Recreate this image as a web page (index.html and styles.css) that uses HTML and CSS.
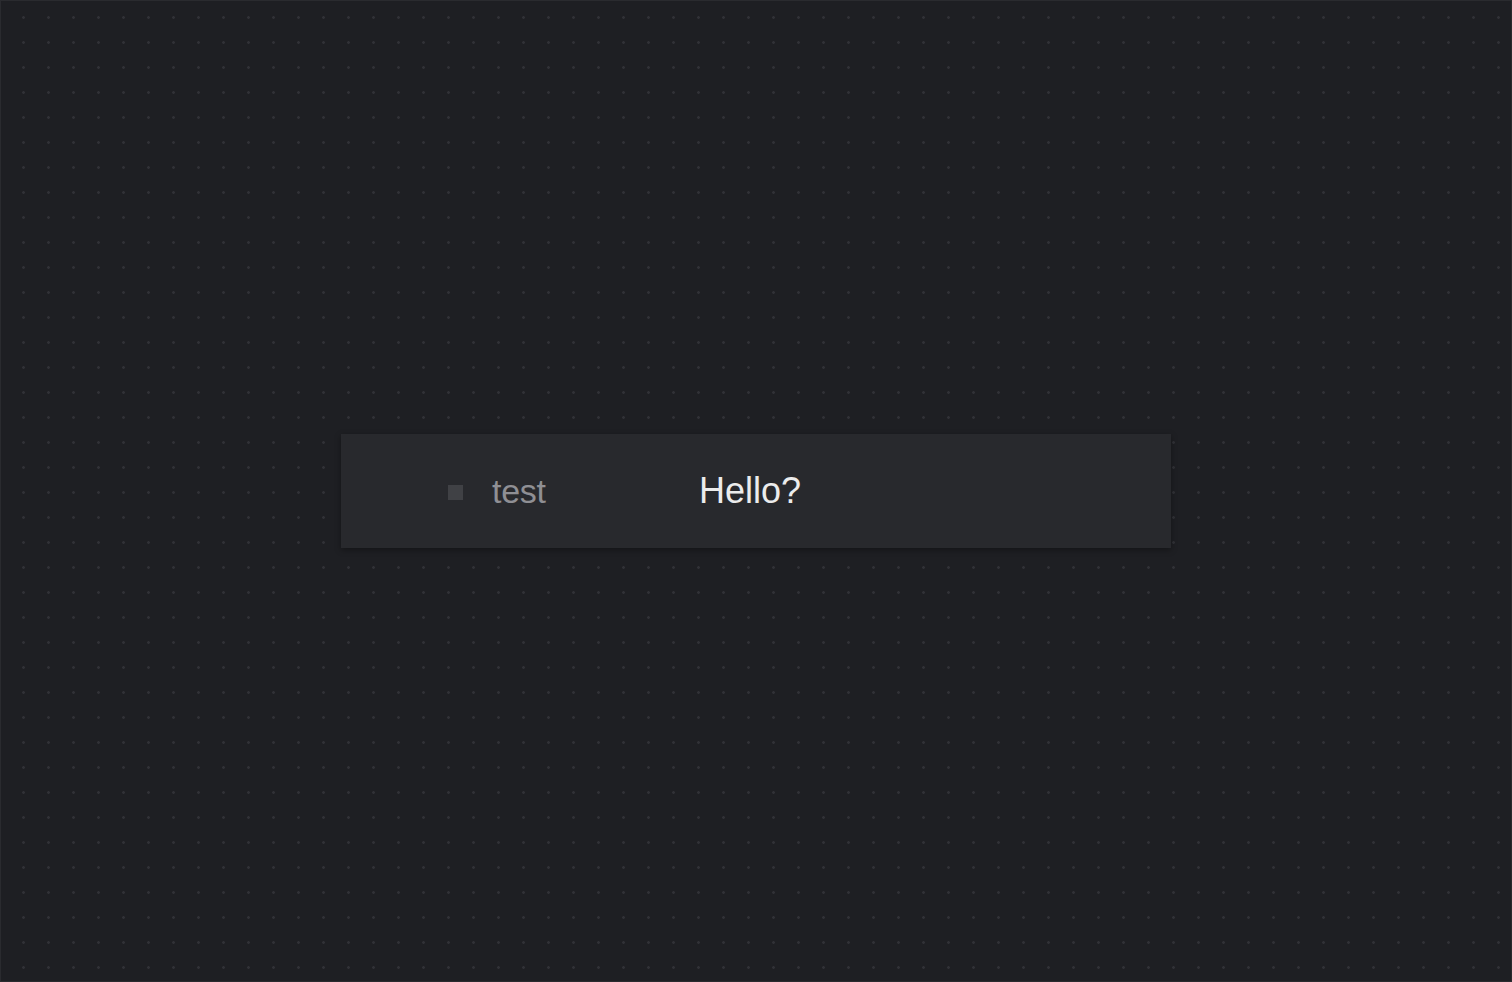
FILE: index.html
```html
<!DOCTYPE html>
<html lang="en">
<head>
<meta charset="utf-8">
<title>Canvas</title>
<link rel="stylesheet" href="styles.css">
</head>
<body>
<main class="canvas">
  <div class="card">
    <span class="marker"></span>
    <span class="label">test</span>
    <span class="value">Hello?</span>
  </div>
</main>
</body>
</html>
```

FILE: styles.css
```css
html, body {
  margin: 0;
  padding: 0;
  height: 100%;
}
body {
  background: #1e1f23;
  font-family: "Liberation Sans", Arial, sans-serif;
}
.canvas {
  box-sizing: border-box;
  height: 100vh;
  border: 1px solid #2a2b2f;
  background-color: #1e1f23;
  background-image: radial-gradient(circle, #303136 1.1px, transparent 1.6px);
  background-size: 25px 25px;
  background-position: 10px 4px;
  display: flex;
  align-items: center;
  justify-content: center;
}
.card {
  width: 830px;
  height: 114px;
  box-sizing: border-box;
  background: #28292d;
  box-shadow: 0 2px 6px rgba(0, 0, 0, 0.35);
  display: flex;
  align-items: center;
  padding-left: 107px;
}
.marker {
  width: 15px;
  height: 15px;
  background: #404145;
  flex: none;
  margin-top: 2px;
}
.label {
  margin-left: 29px;
  width: 207px;
  font-size: 34px;
  color: #8f8f94;
  letter-spacing: -0.3px;
}
.value {
  font-size: 36px;
  color: #ececec;
}
```
